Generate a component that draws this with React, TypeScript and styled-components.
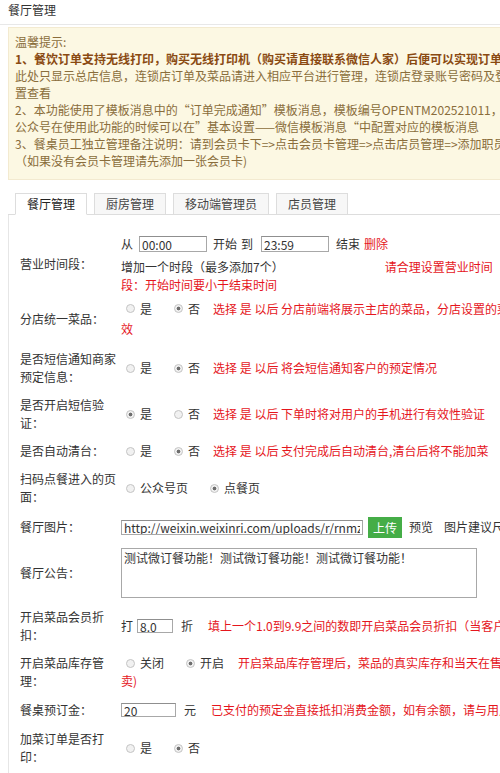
import React from "react";
import styled, { createGlobalStyle } from "styled-components";

const GlobalStyle = createGlobalStyle`
  html, body {
    margin: 0;
    padding: 0;
    overflow: hidden;
    background: #fff;
  }
  body {
    font-family: "Noto Sans CJK SC", "Microsoft YaHei", sans-serif;
    font-size: 12px;
    color: #333;
  }
`;

const Page = styled.div`
  width: 640px;
  padding-left: 8px;
`;

const Title = styled.div`
  height: 24px;
  line-height: 20px;
  font-size: 12px;
  color: #333;
  border-bottom: 1px solid #e8e8e8;
  margin-left: -8px;
  padding-left: 8px;
`;

const Notice = styled.div`
  margin-top: 2px;
  background: #fcf8e3;
  border: 1px solid #f3ead0;
  padding: 5px 6px 10px;
  line-height: 17px;
  color: #8a6d3b;
  white-space: nowrap;
`;

const NoticeLine = styled.div<{ $strong?: boolean }>`
  font-weight: ${(p) => (p.$strong ? 700 : 400)};
  color: ${(p) => (p.$strong ? "#8a4a12" : "#8a6d3b")};
`;

const TabBar = styled.div`
  margin-top: 13px;
  display: flex;
  gap: 7px;
  padding-left: 7px;
  border-bottom: 1px solid #ddd;
`;

const Tab = styled.div<{ $active?: boolean }>`
  height: 20px;
  line-height: 20px;
  padding: 0 11px;
  border: 1px solid #ddd;
  border-bottom: none;
  margin-bottom: -1px;
  background: ${(p) => (p.$active ? "#fff" : "#f7f7f7")};
  color: ${(p) => (p.$active ? "#222" : "#444")};
  border-bottom: 1px solid ${(p) => (p.$active ? "#fff" : "#ddd")};
`;

const Panel = styled.div`
  border-left: 1px solid #e6e6e6;
  padding: 14px 0 12px;
`;

const Row = styled.div<{ $pt?: number; $pb?: number }>`
  display: flex;
  align-items: center;
  padding-top: ${(p) => p.$pt ?? 5}px;
  padding-bottom: ${(p) => p.$pb ?? 5}px;
`;

const Label = styled.div`
  width: 100px;
  flex: none;
  padding-left: 11px;
  line-height: 18px;
  color: #333;
  white-space: normal;
  word-break: break-all;
`;

const Value = styled.div`
  flex: 1;
  min-width: 0;
  padding-left: 1px;
  white-space: nowrap;
`;

const Line = styled.div<{ $h?: number }>`
  display: flex;
  align-items: center;
  height: ${(p) => p.$h ?? 18}px;
  line-height: ${(p) => p.$h ?? 18}px;
`;

const Txt = styled.span<{ $ml?: number }>`
  margin-left: ${(p) => p.$ml ?? 0}px;
  color: #333;
`;

const Red = styled.span<{ $ml?: number }>`
  margin-left: ${(p) => p.$ml ?? 0}px;
  color: #e5161d;
`;

const Field = styled.input<{ $w: number; $ml?: number; $mr?: number; $h?: number }>`
  box-sizing: border-box;
  width: ${(p) => p.$w}px;
  height: ${(p) => p.$h ?? 16}px;
  margin: 0 ${(p) => p.$mr ?? 0}px 0 ${(p) => p.$ml ?? 0}px;
  padding: 0 2px;
  border: 1px solid #a8a8a8;
  border-top-color: #8f8f8f;
  font-family: "Noto Sans CJK SC", sans-serif;
  font-size: 12px;
  color: #333;
  background: #fff;
  outline: none;
`;

const Area = styled.textarea`
  box-sizing: border-box;
  width: 356px;
  height: 50px;
  margin: 0;
  padding: 1px 2px;
  border: 1px solid #a8a8a8;
  font-family: "Noto Sans CJK SC", sans-serif;
  font-size: 12px;
  line-height: 16px;
  color: #333;
  resize: none;
  outline: none;
  display: block;
`;

const UploadButton = styled.button`
  margin-left: 5px;
  width: 34px;
  height: 21px;
  padding: 0;
  border: none;
  background: #45ad47;
  color: #fff;
  font-family: "Noto Sans CJK SC", sans-serif;
  font-size: 12px;
`;

const Option = styled.span`
  display: inline-flex;
  align-items: center;
  & + & {
    margin-left: 17px;
  }
`;

const Dot = styled.span<{ $on?: boolean }>`
  box-sizing: border-box;
  width: 9px;
  height: 9px;
  margin: 0 5px;
  border-radius: 50%;
  border: 1px solid #c4c4c4;
  background: ${(p) =>
    p.$on
      ? "radial-gradient(circle, #6e6e6e 0 1.6px, #f1f1f1 2.2px)"
      : "#f1f1f1"};
  flex: none;
`;

type RadioProps = { on?: boolean; text: string };

const Radio = ({ on, text }: RadioProps) => (
  <Option>
    <Dot $on={on} />
    <Txt>{text}</Txt>
  </Option>
);

export default function App() {
  return (
    <Page>
      <GlobalStyle />
      <Title>餐厅管理</Title>
      <Notice>
        <NoticeLine>温馨提示:</NoticeLine>
        <NoticeLine $strong>
          1、餐饮订单支持无线打印，购买无线打印机（购买请直接联系微信人家）后便可以实现订单自动打印
        </NoticeLine>
        <NoticeLine>
          此处只显示总店信息，连锁店订单及菜品请进入相应平台进行管理，连锁店登录账号密码及登录地址请在帐号设
        </NoticeLine>
        <NoticeLine>置查看</NoticeLine>
        <NoticeLine>
          2、本功能使用了模板消息中的“订单完成通知”模板消息，模板编号OPENTM202521011，
        </NoticeLine>
        <NoticeLine>
          公众号在使用此功能的时候可以在”基本设置——微信模板消息“中配置对应的模板消息
        </NoticeLine>
        <NoticeLine>
          3、餐桌员工独立管理备注说明：请到会员卡下=&gt;点击会员卡管理=&gt;点击店员管理=&gt;添加职员
        </NoticeLine>
        <NoticeLine>（如果没有会员卡管理请先添加一张会员卡)</NoticeLine>
      </Notice>

      <TabBar>
        <Tab $active>餐厅管理</Tab>
        <Tab>厨房管理</Tab>
        <Tab>移动端管理员</Tab>
        <Tab>店员管理</Tab>
      </TabBar>

      <Panel>
        <Row $pb={2}>
          <Label>营业时间段：</Label>
          <Value>
            <Line $h={20}>
              <Txt>从</Txt>
              <Field $w={68} $ml={6} $mr={6} defaultValue="00:00" />
              <Txt>开始</Txt>
              <Txt $ml={4}>到</Txt>
              <Field $w={68} $ml={8} $mr={7} defaultValue="23:59" />
              <Txt>结束</Txt>
              <Red $ml={4}>删除</Red>
            </Line>
            <Line style={{ marginTop: 4 }}>
              <Txt>增加一个时段（最多添加7个）</Txt>
              <Red $ml={101}>请合理设置营业时间</Red>
            </Line>
            <Line>
              <Red>段：开始时间要小于结束时间</Red>
            </Line>
          </Value>
        </Row>

        <Row $pt={2} $pb={6}>
          <Label>分店统一菜品：</Label>
          <Value>
            <Line $h={21}>
              <Radio text="是" />
              <Radio on text="否" />
              <Red $ml={13}>选择 是 以后 分店前端将展示主店的菜品，分店设置的菜品无</Red>
            </Line>
            <Line $h={20}>
              <Red>效</Red>
            </Line>
          </Value>
        </Row>

        <Row>
          <Label>是否短信通知商家预定信息：</Label>
          <Value>
            <Line>
              <Radio text="是" />
              <Radio on text="否" />
              <Red $ml={13}>选择 是 以后 将会短信通知客户的预定情况</Red>
            </Line>
          </Value>
        </Row>

        <Row>
          <Label>是否开启短信验证：</Label>
          <Value>
            <Line>
              <Radio on text="是" />
              <Radio text="否" />
              <Red $ml={13}>选择 是 以后 下单时将对用户的手机进行有效性验证</Red>
            </Line>
          </Value>
        </Row>

        <Row>
          <Label>是否自动清台：</Label>
          <Value>
            <Line>
              <Radio text="是" />
              <Radio on text="否" />
              <Red $ml={13}>选择 是 以后 支付完成后自动清台,清台后将不能加菜</Red>
            </Line>
          </Value>
        </Row>

        <Row>
          <Label>扫码点餐进入的页面：</Label>
          <Value>
            <Line>
              <Radio text="公众号页" />
              <Radio on text="点餐页" />
            </Line>
          </Value>
        </Row>

        <Row>
          <Label>餐厅图片：</Label>
          <Value>
            <Line $h={22}>
              <Field
                $w={242}
                $h={15}
                defaultValue="http://weixin.weixinri.com/uploads/r/rnmzyb1466990012/1/8/e/1/thumb_5777c6b6cf6e0.jpg"
              />
              <UploadButton>上传</UploadButton>
              <Txt $ml={7}>预览</Txt>
              <Txt $ml={11}>图片建议尺寸：640*320</Txt>
            </Line>
          </Value>
        </Row>

        <Row>
          <Label>餐厅公告：</Label>
          <Value>
            <Area defaultValue="测试微订餐功能！测试微订餐功能！测试微订餐功能！" />
          </Value>
        </Row>

        <Row>
          <Label>开启菜品会员折扣：</Label>
          <Value>
            <Line>
              <Txt>打</Txt>
              <Field $w={36} $h={14} $ml={4} defaultValue="8.0" />
              <Txt $ml={8}>折</Txt>
              <Red $ml={15}>
                填上一个1.0到9.9之间的数即开启菜品会员折扣（当客户为会员时享受折扣）
              </Red>
            </Line>
          </Value>
        </Row>

        <Row>
          <Label>开启菜品库存管理：</Label>
          <Value>
            <Line>
              <Radio text="关闭" />
              <Radio on text="开启" />
              <Red $ml={14}>开启菜品库存管理后，菜品的真实库存和当天在售数量为0时将自动下架（售</Red>
            </Line>
            <Line>
              <Red>卖)</Red>
            </Line>
          </Value>
        </Row>

        <Row>
          <Label>餐桌预订金：</Label>
          <Value>
            <Line $h={20}>
              <Field $w={55} $h={14} defaultValue="20" />
              <Txt $ml={8}>元</Txt>
              <Red $ml={15}>已支付的预定金直接抵扣消费金额，如有余额，请与用户协商处理</Red>
            </Line>
          </Value>
        </Row>

        <Row>
          <Label>加菜订单是否打印：</Label>
          <Value>
            <Line>
              <Radio text="是" />
              <Radio on text="否" />
            </Line>
          </Value>
        </Row>
      </Panel>
    </Page>
  );
}
